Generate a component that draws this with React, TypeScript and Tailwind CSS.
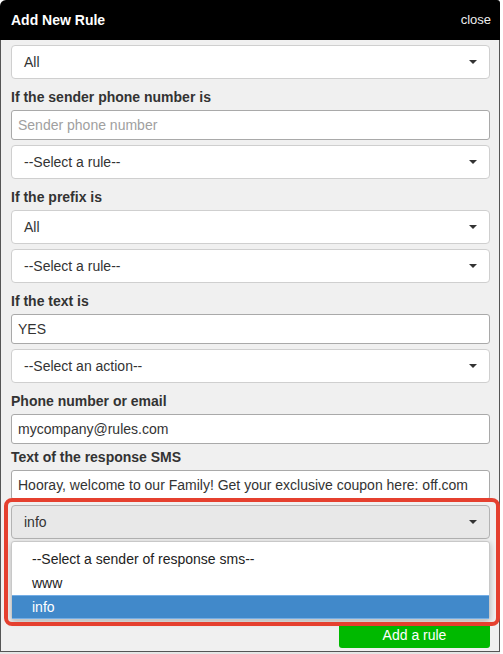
import React from "react";

const font = { fontFamily: '"Liberation Sans", Arial, Helvetica, sans-serif' };

function Caret() {
  return (
    <svg width="8" height="4" viewBox="0 0 8 4" className="shrink-0 mr-[1px]">
      <polygon points="0,0 8,0 4,4" fill="#333" />
    </svg>
  );
}

function Select({ value, pressed }: { value: string; pressed?: boolean }) {
  return (
    <div
      className={
        "h-[34px] flex items-center justify-between pl-[12px] pr-[11px] rounded-[4px] border text-[14px] text-[#333] " +
        (pressed ? "bg-[#e8e8e8] border-[#b3b3b3]" : "bg-white border-[#cfcfcf]")
      }
    >
      <span>{value}</span>
      <Caret />
    </div>
  );
}

function Input({ value, placeholder }: { value?: string; placeholder?: string }) {
  return (
    <div className="h-[30px] flex items-center pl-[6px] rounded-[3px] border border-[#a9a9a9] bg-white text-[14px] whitespace-nowrap overflow-hidden">
      {value ? (
        <span className="text-[#333]">{value}</span>
      ) : (
        <span className="text-[#a0a0a0]">{placeholder}</span>
      )}
    </div>
  );
}

function Label({ children, mt = "mt-2" }: { children: React.ReactNode; mt?: string }) {
  return (
    <div className={mt + " mb-[3px] h-5 leading-5 text-[14px] font-bold text-[#333]"}>{children}</div>
  );
}

export default function App() {
  return (
    <div className="w-[503px] h-[654px] bg-white overflow-hidden" style={font}>
      <div className="w-[500px] flex flex-col">
        <div className="h-10 bg-black rounded-tl-[6px] rounded-tr-[3px] flex items-center justify-between pl-[11px] pr-[9px]">
          <span className="text-white font-bold text-[14px]">Add New Rule</span>
          <span className="text-[#eee] text-[13px]">close</span>
        </div>
        <div className="bg-[#f0f0f0] border-x border-b border-[#555] pt-[5px] pl-[10px] pr-[9px] pb-[3px] flex flex-col">
          <Select value="All" />
          <Label>If the sender phone number is</Label>
          <Input placeholder="Sender phone number" />
          <div className="mt-[5px]">
            <Select value="--Select a rule--" />
          </div>
          <Label>If the prefix is</Label>
          <Select value="All" />
          <div className="mt-[5px]">
            <Select value="--Select a rule--" />
          </div>
          <Label>If the text is</Label>
          <Input value="YES" />
          <div className="mt-[5px]">
            <Select value="--Select an action--" />
          </div>
          <Label>Phone number or email</Label>
          <Input value="mycompany@rules.com" />
          <Label mt="mt-[3px]">Text of the response SMS</Label>
          <Input value="Hooray, welcome to our Family! Get your exclusive coupon here: off.com" />
          <div className="relative mt-[5px]">
            <Select value="info" pressed />
            <div className="mt-[2px] bg-white border border-[#c8c8c8] rounded-[3px] pt-[5px] shadow-[0_2px_6px_rgba(0,0,0,0.25)] text-[14px] text-[#222]">
              <div className="h-6 leading-6 pl-[20px]">--Select a sender of response sms--</div>
              <div className="h-6 leading-6 pl-[20px]">www</div>
              <div className="h-6 leading-6 pl-[20px] bg-[#4189ca] border-y border-[#74aee6] text-white flex items-center">info</div>
            </div>
            <div className="absolute -left-[7px] -right-[10px] -top-[7px] -bottom-[6px] border-[4px] border-[#e5402f] rounded-[8px] pointer-events-none" />
          </div>
          <div className="mt-[2px] self-end w-[151px] h-[26px] bg-[#00b900] rounded-[3px] flex items-center justify-center text-white text-[14px]">
            Add a rule
          </div>
        </div>
      </div>
      <div className="w-[500px] h-[2px] bg-[#e6e6e6]" />
    </div>
  );
}
